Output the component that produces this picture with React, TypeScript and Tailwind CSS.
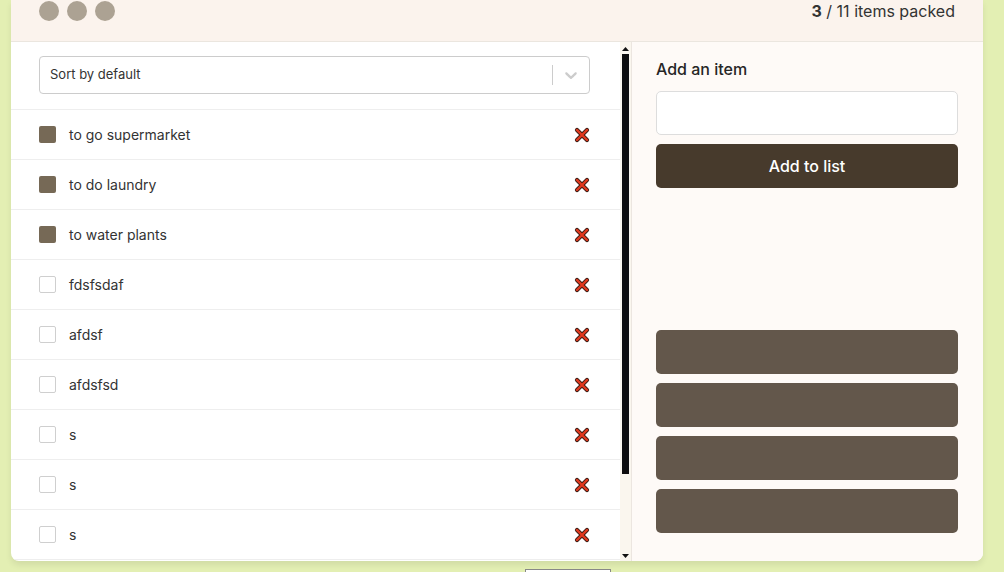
import React from "react";

type Item = { id: number; name: string; packed: boolean };

const items: Item[] = [
  { id: 1, name: "to go supermarket", packed: true },
  { id: 2, name: "to do laundry", packed: true },
  { id: 3, name: "to water plants", packed: true },
  { id: 4, name: "fdsfsdaf", packed: false },
  { id: 5, name: "afdsf", packed: false },
  { id: 6, name: "afdsfsd", packed: false },
  { id: 7, name: "s", packed: false },
  { id: 8, name: "s", packed: false },
  { id: 9, name: "s", packed: false },
  { id: 10, name: "s", packed: false },
  { id: 11, name: "s", packed: false },
];

function DeleteIcon() {
  return (
    <svg width="16" height="16" viewBox="0 0 16 16" aria-hidden>
      <path d="M3 3 L13 13 M13 3 L3 13" stroke="#3b1c14" strokeWidth="4.2" strokeLinecap="round" />
      <path d="M3 3 L13 13 M13 3 L3 13" stroke="#e2391f" strokeWidth="2.4" strokeLinecap="round" />
    </svg>
  );
}

function SortSelect() {
  return (
    <div className="flex h-[38px] items-center rounded-[4px] border border-[#cccccc] bg-white">
      <span className="flex-1 pl-[10px] text-[13px] text-[#333333]">Sort by default</span>
      <span className="h-[20px] w-px bg-[#cccccc]" />
      <span className="flex items-center px-[8px] text-[#cccccc]">
        <svg width="20" height="20" viewBox="0 0 20 20" fill="currentColor" aria-hidden>
          <path d="M4.516 7.548c0.436-0.446 1.043-0.481 1.576 0l3.908 3.747 3.908-3.747c0.533-0.481 1.141-0.446 1.574 0 0.436 0.445 0.408 1.197 0 1.615-0.406 0.418-4.695 4.502-4.695 4.502-0.217 0.223-0.502 0.335-0.787 0.335s-0.57-0.112-0.789-0.335c0 0-4.287-4.084-4.695-4.502s-0.436-1.17 0-1.615z" />
        </svg>
      </span>
    </div>
  );
}

function ItemRow({ item }: { item: Item }) {
  return (
    <li className="flex h-[50px] shrink-0 items-center border-b border-[#eeeeee] pl-[28px] pr-[30px]">
      {item.packed ? (
        <span className="h-[17px] w-[17px] rounded-[2px] bg-[#766956]" />
      ) : (
        <span className="h-[17px] w-[17px] rounded-[2px] border border-[#cfcfcf] bg-white" />
      )}
      <span className="ml-[13px] flex-1 text-[14px] text-[#333333]">{item.name}</span>
      <button className="flex items-center">
        <DeleteIcon />
      </button>
    </li>
  );
}

// thin scrollbar look (headless hides the native one)
function ScrollTrack() {
  return (
    <div className="flex w-[11px] shrink-0 flex-col items-center bg-[#faf6ee] pb-[3px] pt-[5px]">
      <svg width="7" height="4" viewBox="0 0 7 4" aria-hidden>
        <path d="M3.5 0 L7 4 L0 4 Z" fill="#111111" />
      </svg>
      <div className="mt-[3px] h-[420px] w-[7px] bg-[#0d0d0d]" />
      <div className="flex-1" />
      <svg width="7" height="4" viewBox="0 0 7 4" aria-hidden>
        <path d="M0 0 L7 0 L3.5 4 Z" fill="#111111" />
      </svg>
    </div>
  );
}

export default function App() {
  const packed = items.filter((i) => i.packed).length;

  return (
    <div
      className="h-[572px] overflow-hidden bg-[#e3efb3]"
      style={{ fontFamily: "Inter, 'Liberation Sans', sans-serif" }}
    >
      <main className="ml-[11px] flex w-[972px] flex-col overflow-hidden rounded-b-[8px] bg-white shadow-[0_4px_6px_rgba(0,0,0,0.08)]">
        <header className="flex h-[42px] items-center justify-between border-b border-[#ebe6df] bg-[#fbf3ed] pb-[20px] pl-[28px] pr-[28px]">
          <div className="flex gap-[8px]">
            <span className="h-[20px] w-[20px] rounded-full bg-[#aca293]" />
            <span className="h-[20px] w-[20px] rounded-full bg-[#aca293]" />
            <span className="h-[20px] w-[20px] rounded-full bg-[#aca293]" />
          </div>
          <p className="text-[16px] text-[#333333]">
            <b className="font-bold">{packed}</b> / {items.length} items packed
          </p>
        </header>

        <div className="flex h-[519px]">
          <div className="h-full w-[609px] overflow-hidden">
            <div className="border-b border-[#eeeeee] pb-[15px] pl-[28px] pr-[30px] pt-[14px]">
              <SortSelect />
            </div>
            <ul className="flex flex-col">
              {items.map((item) => (
                <ItemRow key={item.id} item={item} />
              ))}
            </ul>
          </div>
          <ScrollTrack />

          <aside className="flex flex-1 flex-col border-l border-[#ece6e0] bg-[#fefaf7] pb-[28px] pl-[24px] pr-[25px] pt-[15px]">
            <h2 className="text-[16px] font-medium text-[#262626]">Add an item</h2>
            <input className="mt-[10px] h-[44px] rounded-[5px] border border-[#dddddd] bg-white px-3 outline-none" />
            <button className="mt-[9px] h-[44px] rounded-[5px] bg-[#473a2c] text-[16px] font-medium text-white">
              Add to list
            </button>
            <div className="mt-auto flex flex-col gap-[9px]">
              <div className="h-[44px] rounded-[5px] bg-[#63574b]" />
              <div className="h-[44px] rounded-[5px] bg-[#63574b]" />
              <div className="h-[44px] rounded-[5px] bg-[#63574b]" />
              <div className="h-[44px] rounded-[5px] bg-[#63574b]" />
            </div>
          </aside>
        </div>
      </main>
      <div className="ml-[525px] mt-[8px] h-[20px] w-[86px] border border-[#888888] bg-white" />
    </div>
  );
}
